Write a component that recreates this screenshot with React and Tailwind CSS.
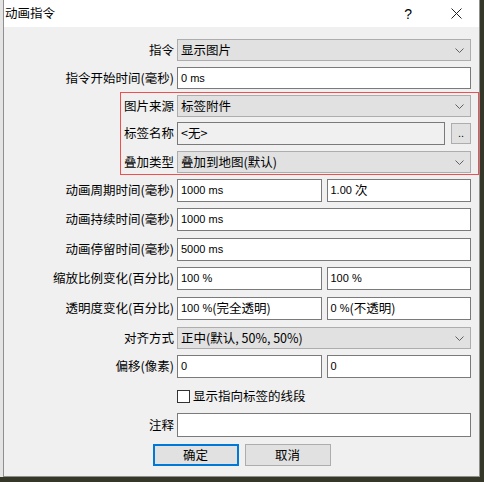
import React from 'react';

function Chevron() {
  return (
    <svg width="9" height="5" viewBox="0 0 9 5" className="shrink-0">
      <path d="M0.5 0.5 L4.5 4.5 L8.5 0.5" fill="none" stroke="#606060" strokeWidth="1" />
    </svg>
  );
}

// CJK run inside a latin value box
function C({ children }) {
  return <span className="text-[12.5px] font-['Noto_Sans_CJK_SC',sans-serif]">{children}</span>;
}

function Select({ value }) {
  return (
    <div className="flex items-center h-full w-full bg-[#e1e1e1] border border-[#adadad] pl-[3px] pr-[6px]">
      <span className="flex-1 text-[12.5px] leading-none text-black whitespace-nowrap">{value}</span>
      <Chevron />
    </div>
  );
}

function Input({ children, disabled }) {
  return (
    <div
      className={`flex items-center h-full flex-1 min-w-0 border border-[#7a7a7a] pl-[3px] ${
        disabled ? 'bg-[#f0f0f0]' : 'bg-white'
      } font-['Liberation_Sans','Noto_Sans_CJK_SC',sans-serif] text-[11px] leading-none text-black whitespace-pre`}
    >
      {children}
    </div>
  );
}

function Row({ label, mt, h, children }) {
  return (
    <div className={`flex items-center ${h} ${mt}`}>
      <div className="w-[170px] text-right text-[12.5px] leading-none text-black whitespace-nowrap">{label}</div>
      <div className="ml-[3px] w-[294px] h-full flex gap-[5px]">{children}</div>
    </div>
  );
}

export default function App() {
  return (
    <div className="relative w-[484px] h-[482px] bg-[#353829] flex items-start font-['Noto_Sans_CJK_SC',sans-serif] overflow-hidden">
      <div className="w-[3px] h-[477px] bg-[#e4e4e4]" />
      <div className="w-[477px] h-[477px] border-x border-b border-[#8f8f8f] flex flex-col">
        {/* title bar */}
        <div className="h-[27px] bg-white flex items-center shrink-0">
          <span className="pl-[1px] text-[12.5px] leading-none text-black">动画指令</span>
          <span className="ml-auto mr-[39px] font-['Liberation_Sans',sans-serif] text-[14px] leading-none text-black">?</span>
          <svg width="11" height="11" viewBox="0 0 11 11" className="mr-[17px]">
            <path d="M0.5 0.5 L10.5 10.5 M10.5 0.5 L0.5 10.5" stroke="#222" strokeWidth="1" fill="none" />
          </svg>
        </div>

        {/* client */}
        <div className="flex-1 bg-[#f0f0f0] pt-[12px] flex flex-col">
          <Row label="指令" h="h-[22px]" mt="mt-0">
            <Select value="显示图片" />
          </Row>
          <Row label="指令开始时间(毫秒)" h="h-[22px]" mt="mt-[6px]">
            <Input>0 ms</Input>
          </Row>
          <Row label="图片来源" h="h-[22px]" mt="mt-[6px]">
            <Select value="标签附件" />
          </Row>
          <Row label="标签名称" h="h-[23px]" mt="mt-[5px]">
            <Input disabled>
              <C>&lt;无&gt;</C>
            </Input>
            <div className="w-[20px] h-[21px] self-center ml-[1px] bg-[#e1e1e1] border border-[#adadad] flex items-end justify-center pb-[4px] font-['Liberation_Sans',sans-serif] text-[11px] leading-none text-black">
              ..
            </div>
          </Row>
          <Row label="叠加类型" h="h-[22px]" mt="mt-[6px]">
            <Select value="叠加到地图(默认)" />
          </Row>
          <Row label="动画周期时间(毫秒)" h="h-[23px]" mt="mt-[6px]">
            <Input>1000 ms</Input>
            <Input>
              {'1.00 '}
              <C>次</C>
            </Input>
          </Row>
          <Row label="动画持续时间(毫秒)" h="h-[23px]" mt="mt-[6px]">
            <Input>1000 ms</Input>
          </Row>
          <Row label="动画停留时间(毫秒)" h="h-[23px]" mt="mt-[7px]">
            <Input>5000 ms</Input>
          </Row>
          <Row label="缩放比例变化(百分比)" h="h-[23px]" mt="mt-[6px]">
            <Input>100 %</Input>
            <Input>100 %</Input>
          </Row>
          <Row label="透明度变化(百分比)" h="h-[23px]" mt="mt-[7px]">
            <Input>
              {'100 %'}
              <C>(完全透明)</C>
            </Input>
            <Input>
              {'0 %'}
              <C>(不透明)</C>
            </Input>
          </Row>
          <Row label="对齐方式" h="h-[22px]" mt="mt-[7px]">
            <Select value="正中(默认, 50%, 50%)" />
          </Row>
          <Row label="偏移(像素)" h="h-[23px]" mt="mt-[6px]">
            <Input>0</Input>
            <Input>0</Input>
          </Row>
          <Row label="" h="h-[22px]" mt="mt-[7px]">
            <div className="flex items-center gap-[3px]">
              <div className="w-[13px] h-[13px] bg-white border border-[#333333]" />
              <span className="text-[12.5px] leading-none text-black">显示指向标签的线段</span>
            </div>
          </Row>
          <Row label="注释" h="h-[24px]" mt="mt-[6px]">
            <Input />
          </Row>

          <div className="mt-[7px] flex justify-center gap-[6px]">
            <div className="w-[86px] h-[22px] bg-[#e1e1e1] border-2 border-[#0078d7] flex items-center justify-center text-[12.5px] leading-none text-black">
              确定
            </div>
            <div className="w-[86px] h-[22px] bg-[#e1e1e1] border border-[#adadad] flex items-center justify-center text-[12.5px] leading-none text-black">
              取消
            </div>
          </div>
        </div>
      </div>

      {/* red highlight annotation */}
      <div className="absolute left-[120px] top-[92px] w-[359px] h-[83px] border border-[#ef4f4f] pointer-events-none" />
    </div>
  );
}
